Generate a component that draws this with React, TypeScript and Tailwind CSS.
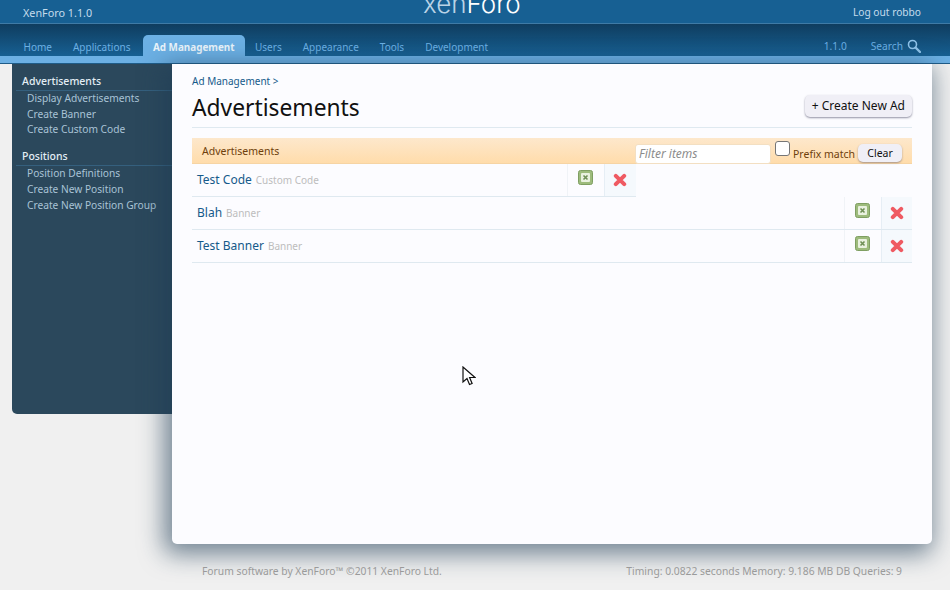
import React from "react";

const font = "font-['Noto_Sans','Open_Sans',sans-serif]";

const tabs = ["Home", "Applications", "Ad Management", "Users", "Appearance", "Tools", "Development"];

const sideGroups = [
    { title: "Advertisements", links: ["Display Advertisements", "Create Banner", "Create Custom Code"] },
    { title: "Positions", links: ["Position Definitions", "Create New Position", "Create New Position Group"] },
];

const GreenIcon = () => (
    <svg width="15" height="15" viewBox="0 0 15 15">
        <rect x="0.5" y="0.5" width="14" height="14" rx="2" fill="#9dbb7c" stroke="#7f9f62" />
        <rect x="3" y="3" width="9" height="9" rx="1" fill="#e9f1df" />
        <path d="M5.5 5.5l4 4M9.5 5.5l-4 4" stroke="#6f8f55" strokeWidth="1.6" />
    </svg>
);

const RedIcon = () => (
    <svg width="14" height="14" viewBox="0 0 14 14">
        <path d="M2.8 2.8l8.4 8.4M11.2 2.8l-8.4 8.4" stroke="#ef5a62" strokeWidth="4" strokeLinecap="round" />
    </svg>
);

const AdRow = ({ name, kind, narrow }: { name: string; kind: string; narrow?: boolean }) => (
    <div className={`flex h-[33px] items-stretch border-b border-[#dfe9f0] ${narrow ? "w-[444px]" : "w-full"}`}>
        <div className="flex flex-1 items-center pl-[5px]">
            <span className="text-[12px] text-[#155a8a]">{name}</span>
            <span className="ml-[4px] mt-[1px] text-[10px] text-[#bdbdbd]">{kind}</span>
        </div>
        <div className="flex w-[37px] justify-center border-l border-[#f0f3f7] pt-[6px] pr-[1px]">
            <GreenIcon />
        </div>
        <div className={`flex items-center justify-center border-l border-[#e6eef5] bg-[#f5f9fd] ${narrow ? "w-[32px] pr-[1px]" : "w-[31px]"}`}>
            <RedIcon />
        </div>
    </div>
);

export default function App() {
    return (
        <div className={`relative h-[590px] w-[950px] overflow-hidden bg-[#f0f0f0] ${font}`}>
            <div className="flex h-[24px] items-center overflow-hidden border-b border-[#3f7ba6] bg-[#176093] pl-[23px] pr-[29px] pt-[3px] text-[10.2px] text-[#c5dcec]">
                <span className="w-[400px] text-[10.8px]">XenForo 1.1.0</span>
                <span className="-mt-[18px] font-['Inter',sans-serif] text-[26px] font-light leading-none text-[#b9d3e6]">
                    xen<span className="text-white">Foro</span>
                </span>
                <span className="ml-auto">Log out robbo</span>
            </div>

            <div className="flex h-[32px] items-end bg-gradient-to-b from-[#0f3d5f] to-[#176093] pl-[13px] pr-[29px]">
                {tabs.map((t) =>
                    t === "Ad Management" ? (
                        <span key={t} className="ml-[2px] flex h-[21px] items-center rounded-t-[5px] bg-[#6cb0e4] px-[10px] pt-[3px] text-[9.9px] font-bold text-[#eaf4fb]">
                            {t}
                        </span>
                    ) : (
                        <span key={t} className="flex h-[21px] items-center px-[10.5px] pt-[3px] text-[10px] text-[#6cb0e4]">
                            {t}
                        </span>
                    )
                )}
                <span className="ml-auto flex h-[21px] items-center pt-[3px] text-[10.2px] text-[#6cb0e4]">
                    1.1.0
                    <span className="ml-[24px]">Search</span>
                    <svg className="ml-[4px] -mt-[3px]" width="14" height="14" viewBox="0 0 14 14" fill="none">
                        <circle cx="5.5" cy="5.5" r="4" stroke="#8fc3ea" strokeWidth="1.6" />
                        <path d="M8.5 8.5l4.5 4.5" stroke="#8fc3ea" strokeWidth="2.4" strokeLinecap="round" />
                    </svg>
                </span>
            </div>

            <div className="h-[8px] border-b border-[#1f5c88] bg-[#6cb0e4]" />

            <div className="flex items-start pl-[12px]">
                <div className="h-[350px] w-[160px] rounded-bl-[5px] bg-[#2b485c] pt-[10px]">
                    {sideGroups.map((g) => (
                        <div key={g.title} className="mb-[11px]">
                            <div className="ml-[4px] border-b border-[#35607e] pl-[6px] pb-[1px] text-[10.5px] font-medium leading-[15px] text-[#e4eef5]">
                                {g.title}
                            </div>
                            {g.links.map((l) => (
                                <div key={l} className="pl-[15px] text-[10.2px] leading-[15.7px] text-[#a9c3d6]">
                                    {l}
                                </div>
                            ))}
                        </div>
                    ))}
                </div>

                <div className="h-[480px] w-[760px] rounded-b-[5px] bg-[#fcfcff] px-[20px] pt-[10px] shadow-[-4px_6px_24px_4px_rgba(30,60,85,0.6)]">
                    <div className="text-[10px] leading-[15px] text-[#155a8a]">Ad Management &gt;</div>
                    <div className="flex h-[39px] items-center justify-between border-b border-[#dfe9f0] pb-[1px]">
                        <h1 className="text-[22.8px] leading-[32px] text-[#111111]">Advertisements</h1>
                        <button className="-mt-[4px] h-[22px] rounded-[5px] bg-[#f0eff6] px-[7px] text-[12px] text-[#111111] shadow-[0_1px_2px_rgba(60,60,90,0.55)]">
                            + Create New Ad
                        </button>
                    </div>

                    <div className="mt-[10px] flex h-[26px] items-center border-b border-[#f6d4a4] bg-gradient-to-b from-[#fde8cc] to-[#ffdcab] pl-[10px] text-[10.5px] text-[#6e3f0c]">
                        <span className="mt-[3px] w-[433px]">Advertisements</span>
                        <input
                            readOnly
                            placeholder="Filter items"
                            className="mt-[6px] h-[20px] w-[136px] rounded-[3px] border border-[#f3dfc2] bg-white pl-[3px] text-[12px] italic placeholder:text-[#8c8c8c]"
                        />
                        <span className="-mt-[4px] ml-[4px] h-[15px] w-[15px] rounded-[3px] border border-[#767676] bg-white" />
                        <span className="ml-[3px] mt-[9px] text-[#6e3f0c]">Prefix match</span>
                        <span className="ml-[3px] mt-[5px] flex h-[18px] w-[44px] items-center justify-center rounded-[5px] bg-[#f0eff6] pt-[1px] text-[10.5px] text-[#111111] shadow-[0_1px_2px_rgba(60,60,90,0.45)]">
                            Clear
                        </span>
                    </div>

                    <AdRow name="Test Code" kind="Custom Code" narrow />
                    <AdRow name="Blah" kind="Banner" />
                    <AdRow name="Test Banner" kind="Banner" />
                </div>
            </div>

            <div className="flex w-[902px] justify-between pl-[202px] pt-[20px] text-[10.3px] text-[#9a9a9a]">
                <span>Forum software by XenForo™ ©2011 XenForo Ltd.</span>
                <span>Timing: 0.0822 seconds Memory: 9.186 MB DB Queries: 9</span>
            </div>

            <svg className="absolute left-[462px] top-[366px]" width="14" height="21" viewBox="0 0 14 21">
                <path d="M1 1v15l4-3.5 2.5 6 2.6-1-2.5-6H13z" fill="#ffffff" stroke="#111111" strokeWidth="1.2" />
            </svg>
        </div>
    );
}
